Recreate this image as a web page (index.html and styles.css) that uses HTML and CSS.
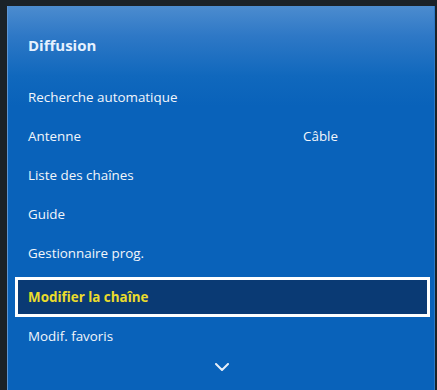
FILE: index.html
```html
<!DOCTYPE html>
<html lang="fr">
<head>
<meta charset="utf-8">
<link rel="stylesheet" href="styles.css">
</head>
<body>
<div class="panel">
  <div class="title">Diffusion</div>
  <ul class="menu">
    <li class="item">Recherche automatique</li>
    <li class="item split"><span>Antenne</span><span class="value">Câble</span></li>
    <li class="item">Liste des chaînes</li>
    <li class="item">Guide</li>
    <li class="item">Gestionnaire prog.</li>
    <li class="item selected">Modifier la chaîne</li>
    <li class="item">Modif. favoris</li>
  </ul>
  <div class="more">
    <svg width="14" height="8" viewBox="0 0 14 8"><path d="M1 1 L7 7 L13 1" fill="none" stroke="#e6eef8" stroke-width="2" stroke-linecap="round" stroke-linejoin="round"/></svg>
  </div>
</div>
</body>
</html>
```
FILE: styles.css
```css
html, body {
  margin: 0;
  padding: 0;
  background: #1b2228;
  height: 390px;
  overflow: hidden;
}
body {
  padding: 6px 0 0 7px;
  box-sizing: border-box;
  font-family: "Open Sans", "DejaVu Sans", sans-serif;
}
.panel {
  width: 428px;
  height: 400px;
  box-sizing: border-box;
  background: linear-gradient(to bottom, #4c8ccf 0px, #2e78c6 30px, #1068bd 70px, #0962ba 100px, #0962ba 100%);
  border-left: 1px solid #5d95d3;
  border-right: 1px solid #2c79c6;
  padding-left: 20px;
  color: #f2f6fb;
}
.title {
  padding-top: 25px;
  line-height: 28px;
  height: 28px;
  font-size: 15px;
  font-weight: 700;
  color: #e6f1ff;
  margin-bottom: 19px;
}
.menu {
  list-style: none;
  margin: 0;
  padding: 0;
}
.item {
  height: 39px;
  line-height: 39px;
  font-size: 13.4px;
}
.split {
  display: grid;
  grid-template-columns: 275px auto;
}
.selected {
  margin: 4px 0 0 -13px;
  width: 415px;
  height: 40px;
  line-height: 34px;
  box-sizing: border-box;
  border: 3px solid #ffffff;
  background: #0a3a74;
  padding-left: 10px;
  color: #eadc2c;
  font-weight: 700;
}
.more {
  display: flex;
  justify-content: center;
  width: 388px;
  padding-top: 7px;
}
```
